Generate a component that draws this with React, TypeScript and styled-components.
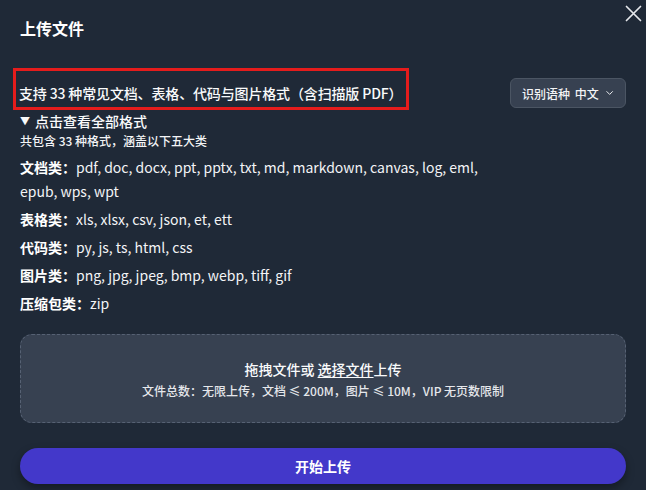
import React from "react";
import styled, { createGlobalStyle } from "styled-components";
import { ChevronDown } from "lucide-react";

const Global = createGlobalStyle`
  html, body { margin: 0; padding: 0; background: #1f2937; }
  body {
    font-family: "Noto Sans CJK SC", "Noto Sans", sans-serif;
    color: #f3f4f6;
    -webkit-font-smoothing: antialiased;
  }
  * { box-sizing: border-box; }
`;

const Dialog = styled.div`
  position: relative;
  width: 646px;
  height: 490px;
  background: #1f2937;
  padding: 16px 20px 0 20px;
  overflow: hidden;
`;

const Title = styled.h2`
  margin: 0;
  font-size: 16px;
  line-height: 24px;
  font-weight: 700;
  color: #ffffff;
`;

const CloseButton = styled.button`
  position: absolute;
  top: 5px;
  right: 4px;
  width: 17px;
  height: 17px;
  padding: 0;
  border: 0;
  background: transparent;
  color: #e5e7eb;
  display: flex;
  align-items: center;
  justify-content: center;
  cursor: pointer;
`;

const TopRow = styled.div`
  margin-top: 28px;
  display: flex;
  justify-content: space-between;
  align-items: flex-start;
`;

const Highlight = styled.div`
  margin-left: -7px;
  border: 3px solid #e51c1c;
  padding: 12px 4px 4px 3px;
  font-size: 14px;
  line-height: 20px;
  font-weight: 500;
  letter-spacing: -0.15px;
  color: #f9fafb;
  white-space: nowrap;
`;

const LangSelect = styled.button`
  margin-top: 10px;
  height: 30px;
  width: 116px;
  display: flex;
  align-items: center;
  justify-content: flex-start;
  gap: 5px;
  background: #374151;
  border: 1px solid #4b5563;
  border-radius: 6px;
  color: #f3f4f6;
  font-family: "Noto Sans CJK SC", "Noto Sans", sans-serif;
  font-size: 12px;
  font-weight: 500;
  padding: 0 10px 0 11px;
  white-space: nowrap;
  cursor: pointer;
`;

const LangText = styled.span`
  word-spacing: 2px;
`;

const Toggle = styled.div`
  margin-top: 1px;
  font-size: 14px;
  line-height: 20px;
  font-weight: 500;
  color: #f9fafb;
  display: flex;
  align-items: center;
  gap: 5px;
`;

const Arrow = styled.span`
  font-size: 10px;
  line-height: 20px;
`;

const Summary = styled.div`
  margin-top: 1px;
  font-size: 12px;
  line-height: 18px;
  font-weight: 500;
  color: #f3f4f6;
`;

const FormatList = styled.div`
  margin-top: 5px;
  width: 470px;
  display: flex;
  flex-direction: column;
  gap: 4px;
`;

const FormatLine = styled.div`
  font-size: 14px;
  line-height: 24px;
  color: #f3f4f6;
`;

const Label = styled.span`
  font-weight: 700;
  color: #ffffff;
`;

const DropZone = styled.div`
  margin-top: 19px;
  height: 89px;
  border: 1px dashed #566173;
  border-radius: 12px;
  background: #374151;
  display: flex;
  flex-direction: column;
  align-items: center;
  justify-content: center;
  gap: 3px;
  padding-top: 2px;
`;

const DropTitle = styled.div`
  font-size: 14px;
  line-height: 20px;
  font-weight: 500;
  color: #f9fafb;
`;

const Link = styled.span`
  text-decoration: underline;
  text-underline-offset: 2px;
  cursor: pointer;
`;

const DropHint = styled.div`
  font-size: 12px;
  line-height: 18px;
  font-weight: 500;
  color: #e5e7eb;
`;

const StartButton = styled.button`
  margin-top: 25px;
  width: 100%;
  height: 36px;
  border: 0;
  border-radius: 18px;
  background: #4338ca;
  color: #ffffff;
  font-family: "Noto Sans CJK SC", "Noto Sans", sans-serif;
  font-size: 14px;
  font-weight: 700;
  box-shadow: 0 4px 8px rgba(0, 0, 0, 0.35);
  cursor: pointer;
`;

const formats: { label: string; items: string }[] = [
  { label: "文档类：", items: "pdf, doc, docx, ppt, pptx, txt, md, markdown, canvas, log, eml, epub, wps, wpt" },
  { label: "表格类：", items: "xls, xlsx, csv, json, et, ett" },
  { label: "代码类：", items: "py, js, ts, html, css" },
  { label: "图片类：", items: "png, jpg, jpeg, bmp, webp, tiff, gif" },
  { label: "压缩包类：", items: "zip" },
];

export default function App() {
  return (
    <>
      <Global />
      <Dialog>
        <Title>上传文件</Title>
        <CloseButton aria-label="关闭">
          <svg width="17" height="17" viewBox="0 0 17 17" fill="none">
            <path d="M1.5 1.5 L15.5 15.5 M15.5 1.5 L1.5 15.5" stroke="currentColor" strokeWidth="1.7" strokeLinecap="round" />
          </svg>
        </CloseButton>
        <TopRow>
          <Highlight>支持 33 种常见文档、表格、代码与图片格式（含扫描版 PDF）</Highlight>
          <LangSelect>
            <LangText>识别语种 中文</LangText>
            <ChevronDown size={12} strokeWidth={2} />
          </LangSelect>
        </TopRow>
        <Toggle>
          <Arrow>▼</Arrow>
          <span>点击查看全部格式</span>
        </Toggle>
        <Summary>共包含 33 种格式，涵盖以下五大类</Summary>
        <FormatList>
          {formats.map((f) => (
            <FormatLine key={f.label}>
              <Label>{f.label}</Label>
              {f.items}
            </FormatLine>
          ))}
        </FormatList>
        <DropZone>
          <DropTitle>
            拖拽文件或 <Link>选择文件</Link>上传
          </DropTitle>
          <DropHint>文件总数：无限上传，文档 ≤ 200M，图片 ≤ 10M，VIP 无页数限制</DropHint>
        </DropZone>
        <StartButton>开始上传</StartButton>
      </Dialog>
    </>
  );
}
